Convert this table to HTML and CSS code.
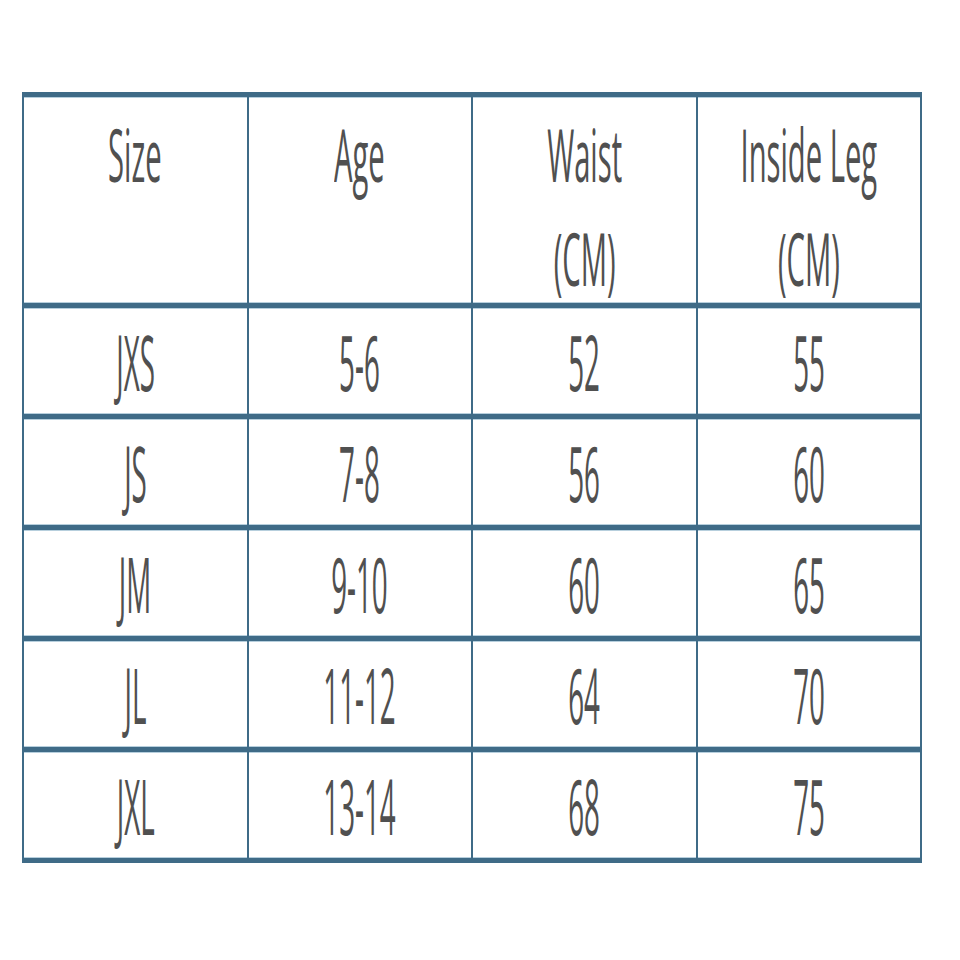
FILE: index.html
```html
<!DOCTYPE html>
<html lang="en">
<head>
<meta charset="utf-8">
<title>Junior Size Chart</title>
<link rel="stylesheet" href="styles.css">
</head>
<body>
<div class="chart">
  <div class="cell head"><span class="txt">Size</span></div>
  <div class="cell head"><span class="txt">Age</span></div>
  <div class="cell head"><span class="txt">Waist<br>(CM)</span></div>
  <div class="cell head"><span class="txt">Inside Leg<br>(CM)</span></div>

  <div class="cell"><span class="txt">JXS</span></div>
  <div class="cell"><span class="txt">5-6</span></div>
  <div class="cell"><span class="txt">52</span></div>
  <div class="cell"><span class="txt">55</span></div>

  <div class="cell"><span class="txt">JS</span></div>
  <div class="cell"><span class="txt">7-8</span></div>
  <div class="cell"><span class="txt">56</span></div>
  <div class="cell"><span class="txt">60</span></div>

  <div class="cell"><span class="txt">JM</span></div>
  <div class="cell"><span class="txt">9-10</span></div>
  <div class="cell"><span class="txt">60</span></div>
  <div class="cell"><span class="txt">65</span></div>

  <div class="cell"><span class="txt">JL</span></div>
  <div class="cell"><span class="txt">11-12</span></div>
  <div class="cell"><span class="txt">64</span></div>
  <div class="cell"><span class="txt">70</span></div>

  <div class="cell"><span class="txt">JXL</span></div>
  <div class="cell"><span class="txt">13-14</span></div>
  <div class="cell"><span class="txt">68</span></div>
  <div class="cell"><span class="txt">75</span></div>
</div>
</body>
</html>
```

FILE: styles.css
```css
html, body {
  margin: 0;
  padding: 0;
  background: #ffffff;
}

body {
  font-family: "Open Sans", "DejaVu Sans", sans-serif;
  color: #505050;
}

.chart {
  display: grid;
  grid-template-columns: repeat(4, minmax(0, 1fr));
  grid-template-rows: 206px repeat(5, 106px);
  gap: 5px 2px;
  padding: 5px 2px;
  width: 896px;
  margin: 92px 0 0 22px;
  background: #3f6b87;
}

.cell {
  background: #ffffff;
  display: flex;
  justify-content: center;
  align-items: center;
  box-shadow: inset 0 1px 0 #b7cfdd, inset 0 -1px 0 #b7cfdd;
  overflow: visible;
  min-width: 0;
}

.cell .txt {
  display: block;
  flex: none;
  white-space: nowrap;
  text-align: center;
  font-size: 77px;
  line-height: normal;
  transform: scaleX(0.36);
}

.cell.head {
  align-items: flex-start;
  padding-top: 5px;
}

.cell.head .txt {
  font-size: 73px;
  line-height: 104px;
  transform: scaleX(0.4);
}
```
